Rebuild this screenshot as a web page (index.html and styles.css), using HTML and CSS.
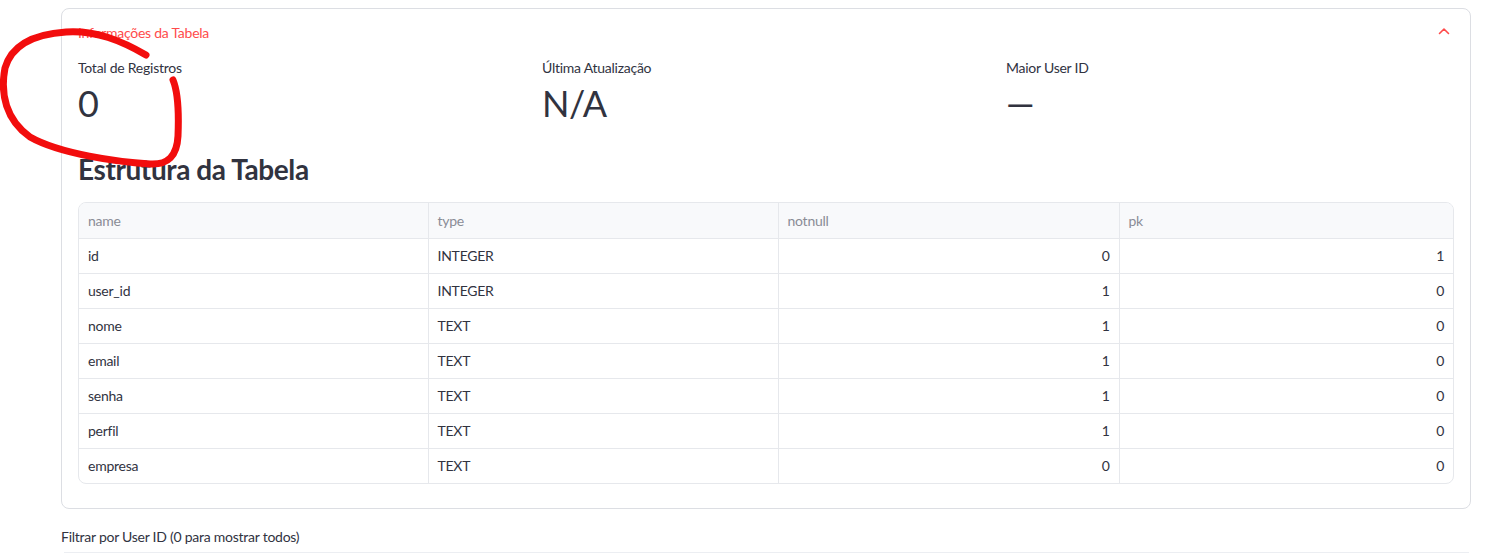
FILE: index.html
```html
<!DOCTYPE html>
<html lang="pt">
<head>
<meta charset="utf-8">
<title>Informações da Tabela</title>
<link rel="stylesheet" href="styles.css">
</head>
<body>
<div class="page">
  <section class="expander">
    <div class="exp-header">
      <span class="exp-title">Informações da Tabela</span>
      <svg class="chev" width="12" height="8" viewBox="0 0 12 8"><path d="M1.5 6.5 L6 2 L10.5 6.5" fill="none" stroke="#ff4b4b" stroke-width="1.6" stroke-linecap="round" stroke-linejoin="round"/></svg>
    </div>
    <div class="exp-body">
      <div class="metrics">
        <div class="metric"><div class="m-label">Total de Registros</div><div class="m-value">0</div></div>
        <div class="metric"><div class="m-label">Última Atualização</div><div class="m-value">N/A</div></div>
        <div class="metric"><div class="m-label">Maior User ID</div><div class="m-value">—</div></div>
      </div>
      <h3 class="heading">Estrutura da Tabela</h3>
      <div class="table-wrap">
        <table class="grid">
          <colgroup><col class="c1"><col class="c2"><col class="c3"><col class="c4"></colgroup>
          <thead><tr><th>name</th><th>type</th><th>notnull</th><th>pk</th></tr></thead>
          <tbody>
            <tr><td>id</td><td>INTEGER</td><td class="num">0</td><td class="num">1</td></tr>
            <tr><td>user_id</td><td>INTEGER</td><td class="num">1</td><td class="num">0</td></tr>
            <tr><td>nome</td><td>TEXT</td><td class="num">1</td><td class="num">0</td></tr>
            <tr><td>email</td><td>TEXT</td><td class="num">1</td><td class="num">0</td></tr>
            <tr><td>senha</td><td>TEXT</td><td class="num">1</td><td class="num">0</td></tr>
            <tr><td>perfil</td><td>TEXT</td><td class="num">1</td><td class="num">0</td></tr>
            <tr><td>empresa</td><td>TEXT</td><td class="num">0</td><td class="num">0</td></tr>
          </tbody>
        </table>
      </div>
    </div>
  </section>
  <div class="filter-label">Filtrar por User ID (0 para mostrar todos)</div>
  <div class="filter-input"></div>
</div>
<svg class="scribble" width="200" height="180" viewBox="0 0 200 180">
  <path d="M146 55 C122 41 96 30 66 32 C36 34 12 44 5 68 C0 94 6 120 30 137 C60 154 118 162 150 164 C168 165 177 156 178 136 C179 112 178 92 173 80" fill="none" stroke="#f20d0d" stroke-width="7" stroke-linecap="round" stroke-linejoin="round"/>
</svg>
</body>
</html>
```

FILE: styles.css
```css
* { box-sizing: border-box; }
html, body { margin: 0; padding: 0; background: #ffffff; }
body {
  font-family: "Source Sans Pro", "Lato", "Noto Sans", sans-serif;
  color: #31333f;
  font-size: 14px;
  letter-spacing: -0.25px;
  position: relative;
  overflow: hidden;
  height: 555px;
}
.page {
  width: 1410px;
  margin-left: 61px;
  padding-top: 8px;
}
.expander {
  border: 1px solid #dcdee3;
  border-radius: 8px;
}
.exp-header {
  height: 46px;
  display: flex;
  align-items: center;
  justify-content: space-between;
  padding: 0 20px 0 16px;
}
.exp-title {
  color: #ff4b4b;
  font-size: 14px;
}
.chev { display: block; margin-top: -2px; }
.exp-body {
  padding: 3px 16px 24px;
}
.metrics {
  display: grid;
  grid-template-columns: repeat(3, 1fr);
  gap: 16px;
}
.m-label {
  font-size: 14px;
  line-height: 20px;
}
.m-value {
  font-size: 36px;
  line-height: 46px;
  margin-top: 2px;
  letter-spacing: -0.5px;
}
.heading {
  font-size: 28px;
  font-weight: 700;
  margin: 21px 0 0;
  line-height: 44px;
  letter-spacing: -0.4px;
}
.table-wrap {
  margin-top: 11px;
  border: 1px solid #e6e8ec;
  border-radius: 8px;
  overflow: hidden;
}
.grid {
  width: 100%;
  border-collapse: collapse;
  table-layout: fixed;
}
.c1 { width: 349px; }
.c2 { width: 350px; }
.c3 { width: 341px; }
.c4 { width: auto; }
.grid th, .grid td {
  height: 35px;
  padding: 0 9px;
  text-align: left;
  font-weight: 400;
  font-size: 14px;
  border-left: 1px solid #e6e8ec;
  border-top: 1px solid #e6e8ec;
}
.grid th {
  background: #f8f9fb;
  color: #8a8c96;
  border-top: none;
}
.grid th:first-child, .grid td:first-child { border-left: none; }
.grid td.num { text-align: right; }
.filter-label {
  margin-top: 18px;
  font-size: 14px;
  line-height: 20px;
}
.filter-input {
  margin-top: 5px;
  height: 40px;
  border-top: 1px solid #eceef2;
  background: #ffffff;
  margin-left: 3px;
  margin-right: 2px;
}
.scribble {
  position: absolute;
  left: 0;
  top: 0;
  pointer-events: none;
}
```
